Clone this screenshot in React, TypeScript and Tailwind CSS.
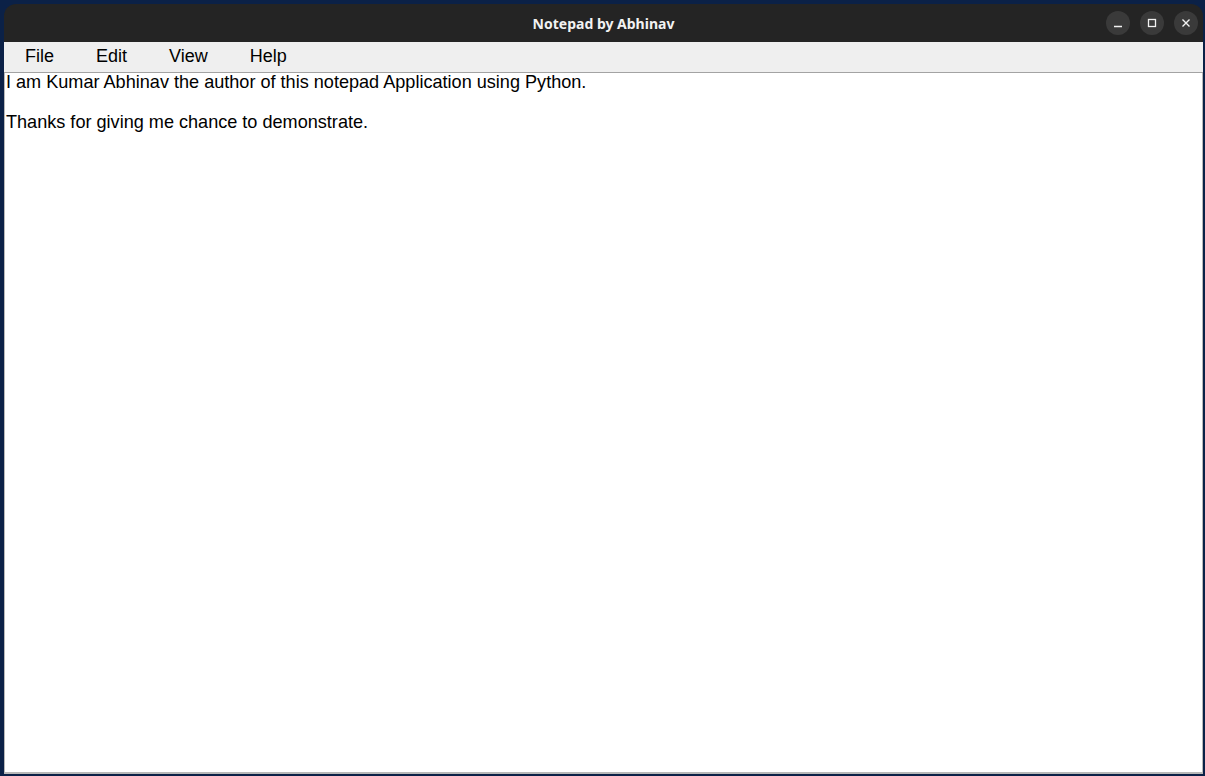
export default function App() {
  return (
    <div className="flex h-[776px] w-[1205px] flex-col bg-[#0b2147] pb-[2px] pl-[4px] pr-[2px] pt-[4px]">
      <div className="flex flex-1 flex-col overflow-hidden rounded-t-[12px]">
        {/* title bar */}
        <div className="relative flex h-[38px] flex-none items-center justify-center bg-[#242424]">
          <span className="font-['Noto_Sans','DejaVu_Sans',sans-serif] text-[14px] font-bold text-[#f2f2f2]">
            Notepad by Abhinav
          </span>
          <div className="absolute right-[5px] top-[7px] flex gap-[10px]">
            <span className="flex h-[24px] w-[24px] items-center justify-center rounded-full bg-[#3a3a3a]">
              <svg width="10" height="10" viewBox="0 0 10 10">
                <path d="M1 8.5h8" stroke="#f2f2f2" strokeWidth="1.3" />
              </svg>
            </span>
            <span className="flex h-[24px] w-[24px] items-center justify-center rounded-full bg-[#3a3a3a]">
              <svg width="10" height="10" viewBox="0 0 10 10">
                <rect x="1.5" y="1.5" width="7" height="7" fill="none" stroke="#f2f2f2" strokeWidth="1.3" />
              </svg>
            </span>
            <span className="flex h-[24px] w-[24px] items-center justify-center rounded-full bg-[#3a3a3a]">
              <svg width="10" height="10" viewBox="0 0 10 10">
                <path d="M1.5 1.5l7 7M8.5 1.5l-7 7" stroke="#f2f2f2" strokeWidth="1.4" />
              </svg>
            </span>
          </div>
        </div>

        {/* menu bar */}
        <div className="flex h-[31px] flex-none items-center border-b border-[#a3a3a3] bg-[#efefef] pb-[2px] font-['Liberation_Sans',Arial,sans-serif] text-[18px] text-black">
          <span className="ml-[21px]">File</span>
          <span className="ml-[42px]">Edit</span>
          <span className="ml-[42px]">View</span>
          <span className="ml-[42px]">Help</span>
        </div>

        {/* editor */}
        <div className="flex-1 border-b-2 border-l border-r border-[#b8b8b8] bg-white pl-[1px] font-['Liberation_Sans',Arial,sans-serif] text-[18.1px] leading-[20px] text-black">
          <p className="-mt-[1px]">I am Kumar Abhinav the author of this notepad Application using Python.</p>
          <p className="h-[20px]"></p>
          <p>Thanks for giving me chance to demonstrate.</p>
        </div>
      </div>
    </div>
  );
}
